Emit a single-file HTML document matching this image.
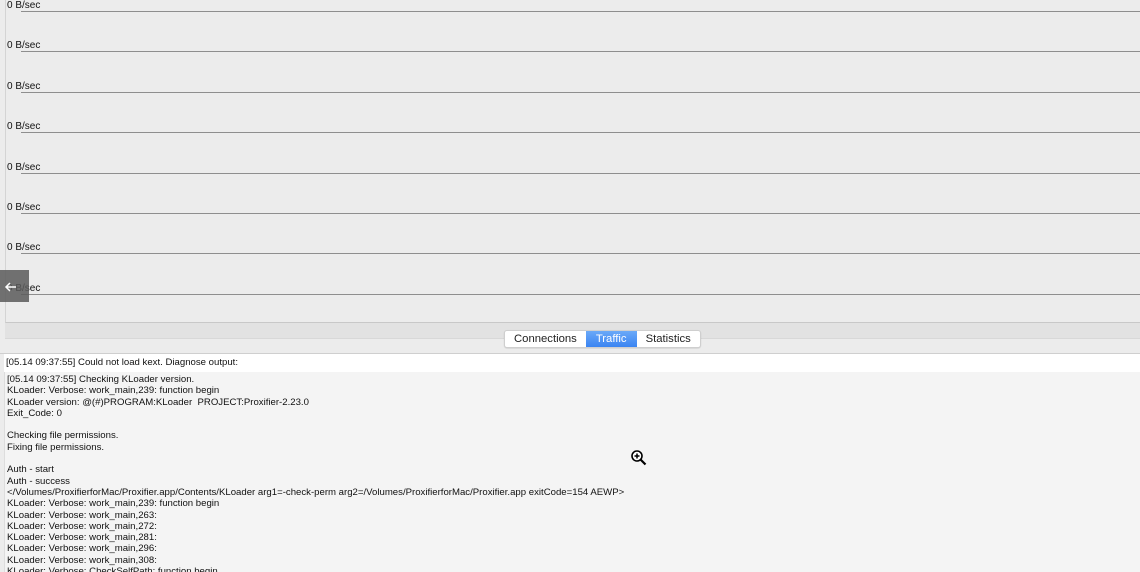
<!DOCTYPE html>
<html><head><style>
body{margin:0;width:1140px;height:570px;overflow:hidden;background:#ececec;font-family:"Liberation Sans",sans-serif;position:relative}
.panel{position:absolute;left:5px;top:-2px;width:1140px;height:324px;border-left:1px solid #d4d4d4;border-bottom:1px solid #c8c8c8;background:#ececec}
.lbl{position:absolute;left:7px;font-size:10px;color:#111}
.ln{position:absolute;left:21px;right:0;height:1px;background:#8e8e8e}
.band{position:absolute;left:5px;right:0;top:323px;height:15px;background:#e2e2e2;border-bottom:1px solid #d8d8d8}
.tabs{position:absolute;left:504px;top:330px;height:16px;display:flex;border:1px solid #cfcfcf;border-radius:3px;background:#fff;font-size:11.3px;overflow:hidden;box-shadow:0 0.5px 1px rgba(0,0,0,.15)}
.tabs div{padding:0 9px;line-height:16px;color:#222}
.tabs .on{background:linear-gradient(#6aa9f8,#3a84f2);color:#fff;padding:0 10px}
.sep{position:absolute;left:0;right:0;top:353px;height:1px;background:#cfcfcf}
.first{position:absolute;left:4px;right:0;top:354px;height:18px;background:#fff;font-size:9.6px;line-height:18px;padding-left:2px;color:#111}
.log{position:absolute;left:4px;right:0;top:372px;height:198px;overflow:hidden;background:#f4f4f4;border-left:1px solid #ddd;font-size:9.6px;line-height:11.3px;padding:2px 0 0 2px;color:#111;white-space:pre}
.arrow{position:absolute;left:0;top:270px;width:29px;height:32px;background:rgba(90,90,90,.85)}
</style></head><body>
<div class="panel"></div>
<div class="lbl" style="top:0px">0 B/sec</div><div class="ln" style="top:11px"></div>
<div class="lbl" style="top:40px">0 B/sec</div><div class="ln" style="top:51px"></div>
<div class="lbl" style="top:81px">0 B/sec</div><div class="ln" style="top:92px"></div>
<div class="lbl" style="top:121px">0 B/sec</div><div class="ln" style="top:132px"></div>
<div class="lbl" style="top:162px">0 B/sec</div><div class="ln" style="top:173px"></div>
<div class="lbl" style="top:202px">0 B/sec</div><div class="ln" style="top:213px"></div>
<div class="lbl" style="top:242px">0 B/sec</div><div class="ln" style="top:253px"></div>
<div class="lbl" style="top:283px">0 B/sec</div><div class="ln" style="top:294px"></div>
<div class="arrow"><svg width="29" height="32"><path d="M16 17H7M10 13l-4 4 4 4" stroke="#fff" stroke-width="1.5" fill="none"/></svg></div>
<div class="band"></div>
<div class="tabs"><div>Connections</div><div class="on">Traffic</div><div>Statistics</div></div>
<div class="sep"></div>
<div class="first">[05.14 09:37:55] Could not load kext. Diagnose output:</div>
<div class="log">[05.14 09:37:55] Checking KLoader version.
KLoader: Verbose: work_main,239: function begin
KLoader version: @(#)PROGRAM:KLoader  PROJECT:Proxifier-2.23.0
Exit_Code: 0

Checking file permissions.
Fixing file permissions.

Auth - start
Auth - success
&lt;/Volumes/ProxifierforMac/Proxifier.app/Contents/KLoader arg1=-check-perm arg2=/Volumes/ProxifierforMac/Proxifier.app exitCode=154 AEWP&gt;
KLoader: Verbose: work_main,239: function begin
KLoader: Verbose: work_main,263:
KLoader: Verbose: work_main,272:
KLoader: Verbose: work_main,281:
KLoader: Verbose: work_main,296:
KLoader: Verbose: work_main,308:
KLoader: Verbose: CheckSelfPath: function begin</div>
<svg style="position:absolute;left:630px;top:449px" width="18" height="18"><circle cx="7" cy="7" r="5" fill="#fff" stroke="#000" stroke-width="1.6"/><path d="M4.5 7h5M7 4.5v5" stroke="#000" stroke-width="1.5"/><path d="M10.5 10.5l5 5" stroke="#000" stroke-width="2.2"/></svg>
</body></html>
